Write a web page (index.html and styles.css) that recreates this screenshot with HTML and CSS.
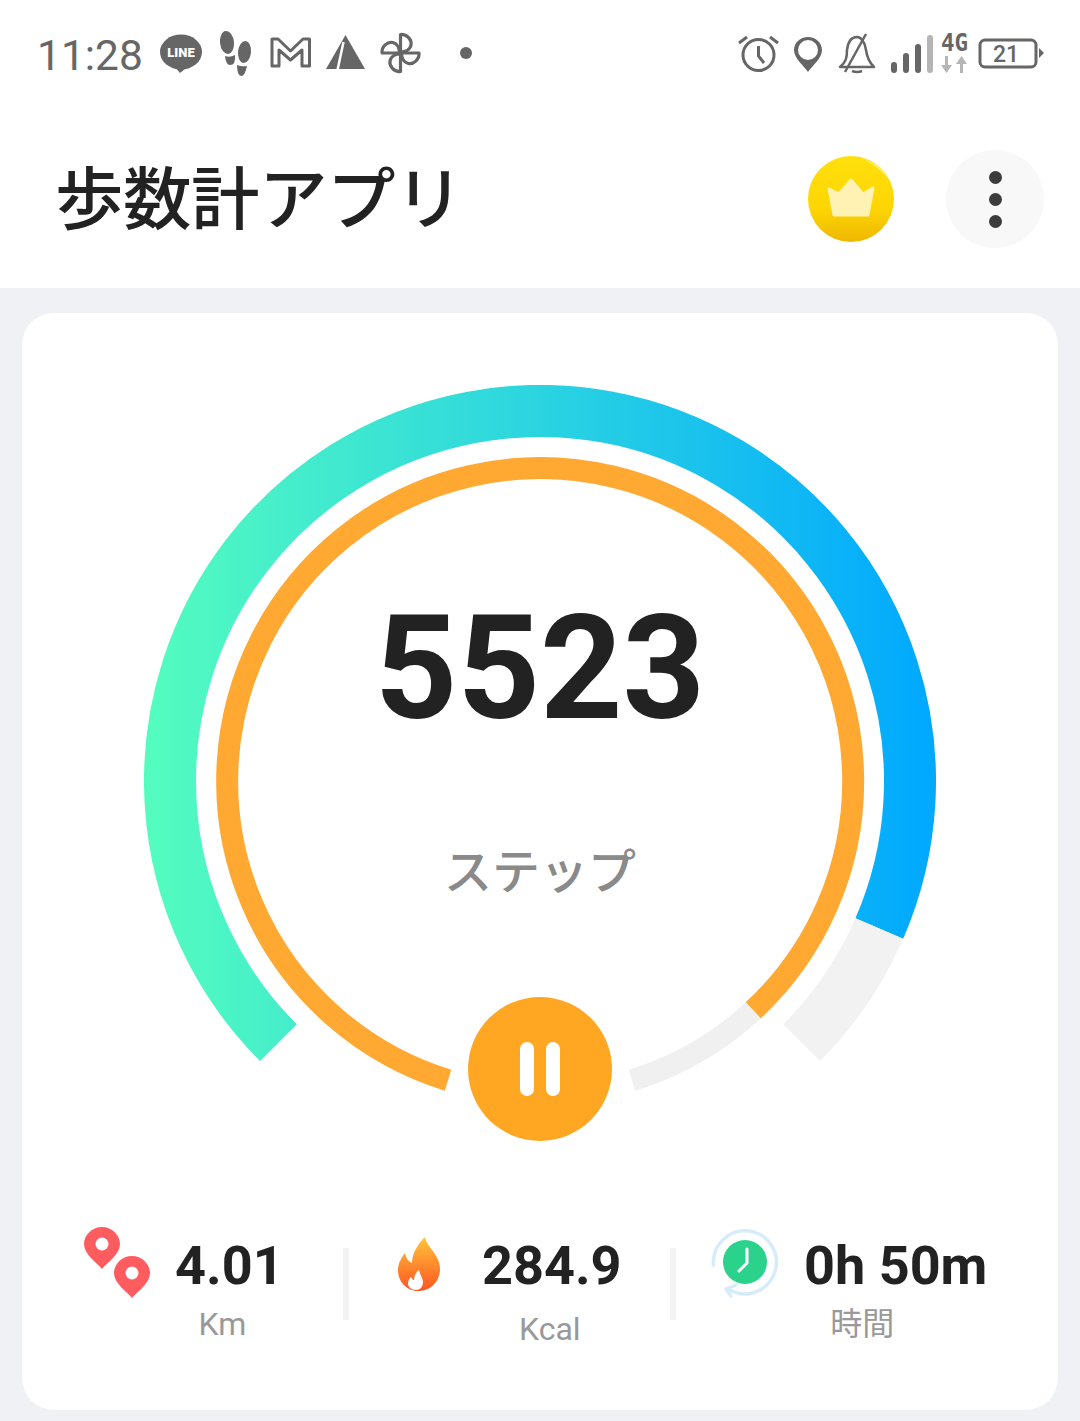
FILE: index.html
```html
<!DOCTYPE html>
<html lang="ja">
<head>
    <meta charset="UTF-8">
    <meta name="viewport" content="width=device-width, initial-scale=1.0">
    <title>歩数計アプリ</title>
    <link rel="stylesheet" href="styles.css">
</head>
<body>
    <header class="top">
        <div class="status-bar">
            <div class="status-left">
                <span class="time">11:28</span>
                <svg class="status-icons" width="320" height="50" viewBox="155 28 320 50">
                    <!-- line -->
                    <ellipse cx="181" cy="52" rx="21" ry="17.5" fill="#666"/>
                    <path d="M175 67 L180 73 Q184 70 188 66 Z" fill="#666"/>
                    <text x="181" y="57" class="line-text">LINE</text>
                    <!-- footsteps -->
                    <g fill="#666">
                        <ellipse cx="227" cy="42.500" rx="7" ry="11.500" transform="rotate(-6 227 42.500)"/>
                        <path d="M225 56 Q230 58 235 55 Q236 65 230 65 Q226 65 225 56 Z"/>
                        <ellipse cx="244.500" cy="52" rx="6.500" ry="11" transform="rotate(6 244.500 52)"/>
                        <path d="M237 65 Q242 67 247 66 Q245 76 241 76 Q237 75 237 65 Z"/>
                    </g>
                    <!-- gmail -->
                    <path d="M272 39 H278 L290.500 51 L303 39 H309.500 V66 H302 V50 L290.500 60 L279 50 V66 H272 Z" fill="none" stroke="#666" stroke-width="3" stroke-linejoin="round"/>
                    <!-- maps -->
                    <path d="M345.500 35 L365 69 H326 Z" fill="#666"/>
                    <path d="M343.500 42 L337.500 70" stroke="#fff" stroke-width="2.500"/>
                    <!-- pinwheel -->
                    <g fill="none" stroke="#666" stroke-width="3.200" stroke-linejoin="round">
                        <path d="M400.500 52 V34.500 C407 34 412 40 411 45 C410 50 405 52 400.500 52 Z"/>
                        <path d="M400.500 52 V34.500 C407 34 412 40 411 45 C410 50 405 52 400.500 52 Z" transform="rotate(90 400.500 53)"/>
                        <path d="M400.500 52 V34.500 C407 34 412 40 411 45 C410 50 405 52 400.500 52 Z" transform="rotate(180 400.500 53)"/>
                        <path d="M400.500 52 V34.500 C407 34 412 40 411 45 C410 50 405 52 400.500 52 Z" transform="rotate(270 400.500 53)"/>
                    </g>
                    <circle cx="466" cy="53" r="6" fill="#666"/>
                </svg>
            </div>
            <svg class="status-icons" width="315" height="50" viewBox="735 28 315 50">
                <!-- alarm -->
                <g fill="none" stroke="#666" stroke-width="3">
                    <circle cx="758.500" cy="55" r="15.500"/>
                    <path d="M758.500 46 V56 L764 63"/>
                    <path d="M739 43 L747 37 M778 43 L770 37"/>
                </g>
                <!-- pin -->
                <path d="M808 37 C800 37 794 43 794 50 C794 58 803 65 808 72 C813 65 822 58 822 50 C822 43 816 37 808 37 Z" fill="#666"/>
                <circle cx="808" cy="50" r="10" fill="#fff"/>
                <!-- bell off -->
                <g fill="none" stroke="#666" stroke-width="2.500" stroke-linejoin="round">
                    <path d="M840 67 H874 C869 62 867 58 866 50 C865 42 861 37 857 37 C851 37 848 42 847 50 C847 58 846 62 840 67 Z"/>
                    <path d="M852 71 Q857 73 862 71"/>
                    <path d="M845 72 L866 34"/>
                </g>
                <!-- signal -->
                <g fill="#666">
                    <rect x="891" y="62" width="6" height="11" rx="3"/>
                    <rect x="903" y="53" width="6" height="20" rx="3"/>
                    <rect x="915" y="44" width="6" height="29" rx="3"/>
                    <rect x="927" y="35" width="6" height="38" rx="3" fill="#b5b5b5"/>
                </g>
                <text x="941" y="51" textLength="27" lengthAdjust="spacingAndGlyphs" class="net-text">4G</text>
                <path d="M945 56 H948 V65 H952 L946.500 73 L941 65 H945 Z" fill="#b5b5b5"/>
                <path d="M960 73 H963 V64 H967 L961.500 56 L956 64 H960 Z" fill="#b5b5b5"/>
                <!-- battery -->
                <rect x="980" y="40" width="56" height="27" rx="5" fill="none" stroke="#666" stroke-width="3"/>
                <text x="1006" y="62" class="batt-text">21</text>
                <path d="M1039 48 L1044 53 L1039 58 Z" fill="#666"/>
            </svg>
        </div>
        <div class="title-row">
            <h1>歩数計アプリ</h1>
            <div class="title-actions">
                <button class="crown-btn">
                    <svg width="86" height="86" viewBox="0 0 86 86">
                        <defs>
                            <linearGradient id="gold" x1="0" y1="0" x2="0" y2="1">
                                <stop offset="0" stop-color="#ffe00c"/>
                                <stop offset="0.6" stop-color="#fdd604"/>
                                <stop offset="1" stop-color="#eeb700"/>
                            </linearGradient>
                        </defs>
                        <circle cx="43" cy="43" r="43" fill="url(#gold)"/>
                        <path d="M56 3 A43 43 0 0 1 82 25 Q72 12 56 3 Z" fill="#ffec70"/>
                        <path d="M21 33 L31 38 L43 24 L55 38 L65 32 L60 59 H26 Z" fill="#fff2b2" stroke="#fff2b2" stroke-width="3" stroke-linejoin="round"/>
                    </svg>
                </button>
                <button class="menu-btn"><span></span><span></span><span></span></button>
            </div>
        </div>
    </header>

    <main class="card">
        <div class="gauge">
            <svg width="792" height="756" viewBox="0 0 792 756">
                <defs>
                    <linearGradient id="arcGrad" gradientUnits="userSpaceOnUse" x1="0" y1="0" x2="792" y2="0">
                        <stop offset="0" stop-color="#54fdbe"/>
                        <stop offset="0.5" stop-color="#2bd4e0"/>
                        <stop offset="1" stop-color="#00a8ff"/>
                    </linearGradient>
                </defs>
                <path d="M134.400 657.600 A370 370 0 1 1 735.300 543.500" fill="none" stroke="url(#arcGrad)" stroke-width="52"/>
                <path d="M735.300 543.500 A370 370 0 0 1 657.600 657.600" fill="none" stroke="#f2f2f2" stroke-width="52"/>
                <path d="M304 695.200 A313 313 0 1 1 609.200 625.400" fill="none" stroke="#ffa933" stroke-width="22"/>
                <path d="M609.200 625.400 A313 313 0 0 1 488 695.200" fill="none" stroke="#f0f0f0" stroke-width="22"/>
            </svg>
            <div class="steps">5523</div>
            <div class="steps-label">ステップ</div>
            <button class="pause-btn"><span></span><span></span></button>
        </div>

        <div class="stats">
            <div class="stat stat-dist">
                <svg class="stat-icon" width="68" height="74" viewBox="0 0 68 74">
                    <path d="M18 1 C8 1 0 9 0 18 C0 28 12 36 18 43 C24 36 36 28 36 18 C36 9 28 1 18 1 Z" fill="#ff5c5f"/>
                    <circle cx="18" cy="18" r="6.500" fill="#fff"/>
                    <path d="M48 30 C38 30 30 38 30 47 C30 57 42 65 48 72 C54 65 66 57 66 47 C66 38 58 30 48 30 Z" fill="#ff5c5f"/>
                    <circle cx="48" cy="47" r="6.500" fill="#fff"/>
                </svg>
                <div class="stat-text">
                    <div class="stat-value">4.01</div>
                    <div class="stat-label">Km</div>
                </div>
            </div>
            <div class="stat-line"></div>
            <div class="stat stat-kcal">
                <svg class="stat-icon" width="44" height="56" viewBox="0 0 44 56">
                    <defs>
                        <linearGradient id="flame" x1="0" y1="0" x2="0" y2="1">
                            <stop offset="0" stop-color="#ffc53a"/>
                            <stop offset="1" stop-color="#ff5522"/>
                        </linearGradient>
                    </defs>
                    <path d="M28 1 C30 12 43 18 43 33 C43 46 33 55 21 55 C10 55 1 46 1 34 C1 27 5 21 8 17 C9 22 11 25 15 27 C15 17 21 8 28 1 Z" fill="url(#flame)"/>
                    <path d="M22 34 C23 39 26 42 26 46 C26 51 23 54 19 54 C14 54 11 51 11 47 C11 44 13 42 14 41 C15 43 16 44 17 44 C17 40 19 36 22 34 Z" fill="#fff"/>
                </svg>
                <div class="stat-text">
                    <div class="stat-value">284.9</div>
                    <div class="stat-label">Kcal</div>
                </div>
            </div>
            <div class="stat-line"></div>
            <div class="stat stat-time">
                <svg class="stat-icon" width="74" height="74" viewBox="0 0 74 74">
                    <path d="M5.500 39 A31.500 31.500 0 1 1 21 63.500" fill="none" stroke="#d6ecfb" stroke-width="3.500" stroke-linecap="round"/>
                    <path d="M28 59 L18 63 L23 70" fill="none" stroke="#d6ecfb" stroke-width="3.500" stroke-linecap="round" stroke-linejoin="round"/>
                    <circle cx="37" cy="36" r="22" fill="#2ad28b"/>
                    <path d="M39 23 V37 L31 45" fill="none" stroke="#fff" stroke-width="3" stroke-linecap="round" stroke-linejoin="round"/>
                </svg>
                <div class="stat-text">
                    <div class="stat-value">0h 50m</div>
                    <div class="stat-label">時間</div>
                </div>
            </div>
        </div>
    </main>
</body>
</html>
```

FILE: styles.css
```css
* {
    margin: 0;
    padding: 0;
    box-sizing: border-box;
}

html, body {
    height: 100%;
    overflow: hidden;
}

body {
    font-family: Roboto, "Noto Sans CJK JP", sans-serif;
    background: #eff1f5;
    color: #222222;
}

button {
    border: none;
    background: none;
}

svg {
    display: block;
    flex: none;
}

.top {
    height: 288px;
    background: #ffffff;
}

.status-bar {
    display: flex;
    align-items: center;
    justify-content: space-between;
    height: 106px;
    padding: 0 30px 0 37px;
}

.status-left {
    display: flex;
    align-items: center;
}

.time {
    width: 118px;
    margin-top: 4px;
    font-size: 42.5px;
    color: #666666;
}

.line-text {
    font-size: 13px;
    font-weight: 900;
    fill: #ffffff;
    text-anchor: middle;
}

.net-text {
    font-family: "DejaVu Sans Mono", monospace;
    font-size: 24px;
    font-weight: 700;
    fill: #666666;
}

.batt-text {
    font-size: 23px;
    font-weight: 500;
    fill: #666666;
    text-anchor: middle;
}

.title-row {
    display: flex;
    align-items: center;
    justify-content: space-between;
    height: 182px;
    padding: 4px 36px 0 55px;
}

h1 {
    margin-bottom: 10px;
    font-family: "Noto Sans CJK JP", sans-serif;
    font-size: 68.500px;
    font-weight: 500;
    letter-spacing: -0.5px;
}

.title-actions {
    display: flex;
    align-items: center;
    gap: 52px;
}

.crown-btn {
    width: 86px;
    height: 86px;
}

.menu-btn {
    display: flex;
    flex-direction: column;
    align-items: center;
    justify-content: center;
    gap: 9px;
    width: 98px;
    height: 98px;
    border-radius: 50%;
    background: #f8f8f8;
}

.menu-btn span {
    width: 13px;
    height: 13px;
    border-radius: 50%;
    background: #3c3c3c;
}

.card {
    height: 1097px;
    margin: 25px 22px 0;
    padding-top: 72px;
    border-radius: 32px;
    background: #ffffff;
}

.gauge {
    position: relative;
    width: 792px;
    margin: 0 auto;
}

.steps {
    position: absolute;
    top: 197px;
    left: 0;
    right: 0;
    font-size: 144px;
    font-weight: 700;
    line-height: 174px;
    text-align: center;
}

.steps-label {
    position: absolute;
    top: 447px;
    left: 0;
    right: 0;
    font-family: "Noto Sans CJK JP", sans-serif;
    font-size: 48px;
    font-weight: 500;
    line-height: 72px;
    text-align: center;
    color: #8a8a8a;
}

.pause-btn {
    position: absolute;
    top: 612px;
    left: 324px;
    display: flex;
    align-items: center;
    justify-content: center;
    gap: 12px;
    width: 144px;
    height: 144px;
    border-radius: 50%;
    background: #ffa722;
}

.pause-btn span {
    width: 14px;
    height: 54px;
    border-radius: 7px;
    background: #ffffff;
}

.stats {
    display: flex;
    align-items: flex-start;
    height: 180px;
    margin-top: 84px;
}

.stat {
    display: flex;
    align-items: flex-start;
}

.stat-dist {
    width: 321px;
    padding-left: 62px;
}

.stat-kcal {
    width: 321px;
    padding-left: 48px;
    padding-top: 11px;
}

.stat-time {
    padding-left: 32px;
}

.stat-dist .stat-icon,
.stat-time .stat-icon {
    margin-top: 1px;
}

.stat-text {
    text-align: center;
}

.stat-dist .stat-text {
    margin: 13px 0 0 23px;
}

.stat-kcal .stat-text {
    margin: 2px 0 0 41px;
}

.stat-time .stat-text {
    margin: 13px 0 0 22px;
}

.stat-value {
    font-size: 54px;
    font-weight: 700;
    line-height: 56px;
}

.stat-label {
    margin-top: 7px;
    font-size: 32px;
    line-height: 46px;
    color: #999999;
}

.stat-dist .stat-label {
    padding-right: 14px;
}

.stat-kcal .stat-label {
    margin-top: 12px;
    padding-right: 4px;
}

.stat-time .stat-label {
    padding-right: 67px;
}

.stat-line {
    flex: none;
    width: 6px;
    height: 72px;
    margin-top: 23px;
    background: #f3f3f3;
}
```
